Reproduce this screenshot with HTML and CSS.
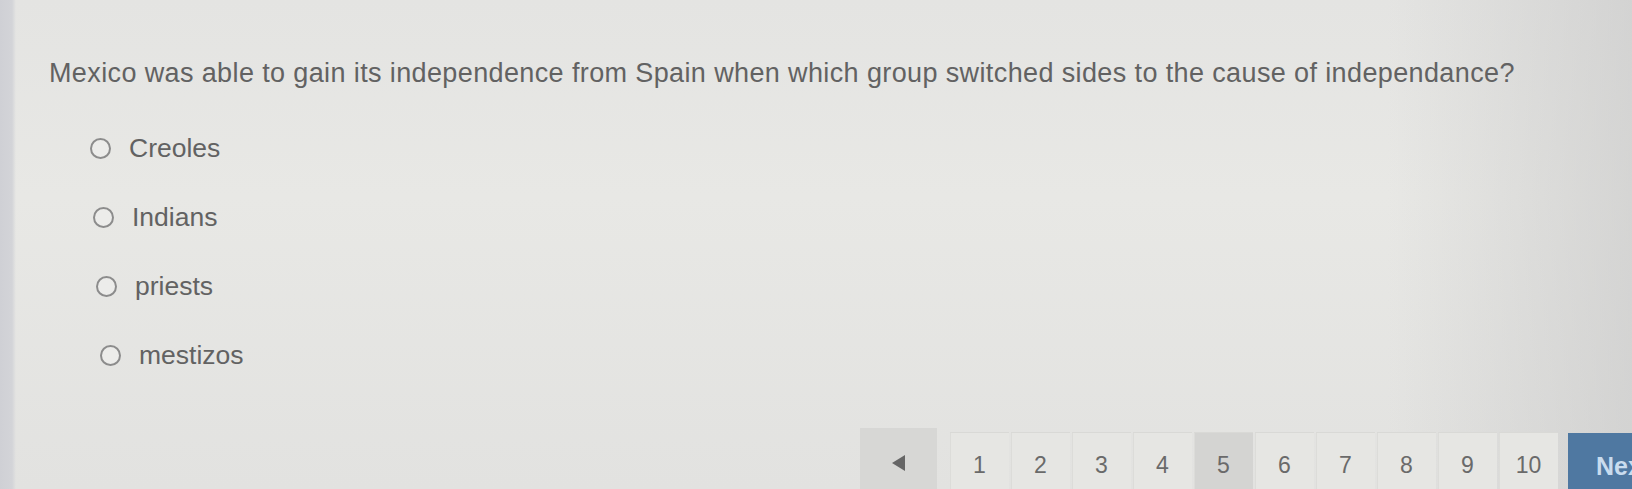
FILE: index.html
```html
<!DOCTYPE html>
<html lang="en">
<head>
<meta charset="utf-8">
<title>Question 5</title>
<link rel="stylesheet" href="styles.css">
</head>
<body>
<main class="quiz">
  <p class="question">Mexico was able to gain its independence from Spain when which group switched sides to the cause of independance?</p>
  <ul class="options">
    <li class="option o1"><span class="radio"></span><span class="label">Creoles</span></li>
    <li class="option o2"><span class="radio"></span><span class="label">Indians</span></li>
    <li class="option o3"><span class="radio"></span><span class="label">priests</span></li>
    <li class="option o4"><span class="radio"></span><span class="label">mestizos</span></li>
  </ul>
  <nav class="pager">
    <button class="prev" aria-label="Previous"><span class="tri"></span></button>
    <div class="nums">
      <button class="num">1</button>
      <button class="num">2</button>
      <button class="num">3</button>
      <button class="num">4</button>
      <button class="num current">5</button>
      <button class="num">6</button>
      <button class="num">7</button>
      <button class="num">8</button>
      <button class="num">9</button>
      <button class="num">10</button>
    </div>
    <button class="next">Next</button>
  </nav>
</main>
</body>
</html>
```
FILE: styles.css
```css
html, body {
  margin: 0;
  padding: 0;
  height: 489px;
  overflow: hidden;
}
body {
  font-family: "Liberation Sans", Arial, sans-serif;
  color: #626262;
  background:
    linear-gradient(90deg, #cfd0d5 0, #d3d4d8 12px, rgba(227,227,225,0) 16px),
    linear-gradient(90deg, rgba(0,0,0,0) 0, rgba(0,0,0,0) 85%, rgba(200,200,200,0.6) 100%),
    linear-gradient(180deg, #e4e4e2 0, #e8e8e5 40%, #e2e2e0 100%);
}
.quiz {
  padding-left: 49px;
}
.question {
  margin: 58px 0 0;
  font-size: 27px;
  letter-spacing: 0.38px;
  line-height: 30px;
  white-space: nowrap;
}
.options {
  list-style: none;
  margin: 26px 0 0;
  padding: 0;
}
.option {
  display: flex;
  align-items: center;
  height: 69px;
  font-size: 26.5px;
}
.o1 { margin-left: 41px; }
.o2 { margin-left: 44px; }
.o3 { margin-left: 47px; }
.o4 { margin-left: 51px; }
.radio {
  width: 17px;
  height: 17px;
  border: 2px solid #8c8c8c;
  border-radius: 50%;
  background: #ececea;
  margin-right: 18px;
  flex: none;
}
.pager {
  display: flex;
  align-items: flex-start;
  margin: 38px 0 0 811px;
  width: 900px;
}
.pager > * {
  flex: none;
}
.pager button {
  font-family: "Liberation Sans", Arial, sans-serif;
  border: 0;
  padding: 0;
  color: #6a6a6a;
  font-size: 23px;
  height: 70px;
}
.prev {
  width: 77px;
  background: #d7d7d5;
  display: flex;
  justify-content: center;
  align-items: center;
}
.tri {
  width: 0;
  height: 0;
  border-top: 8px solid transparent;
  border-bottom: 8px solid transparent;
  border-right: 13px solid #666;
}
.nums {
  display: flex;
  gap: 2px;
  margin: 4px 0 0 13px;
}
.num {
  width: 59px;
  background: #e6e6e3;
  box-shadow: inset 0 1px 0 #d9d9d6, inset 1px 0 0 #dcdcd9;
  padding-bottom: 4px !important;
  text-align: center;
  line-height: 24px;
}
.num.current {
  background: #d4d4d2;
}
.next {
  margin: 5px 0 0 10px;
  width: 140px;
  background: #4f78a1;
  color: #c9dcee !important;
  font-weight: bold;
  text-align: left;
  padding-left: 28px !important;
  padding-bottom: 5px !important;
  font-size: 25px !important;
  line-height: 30px;
}
```
